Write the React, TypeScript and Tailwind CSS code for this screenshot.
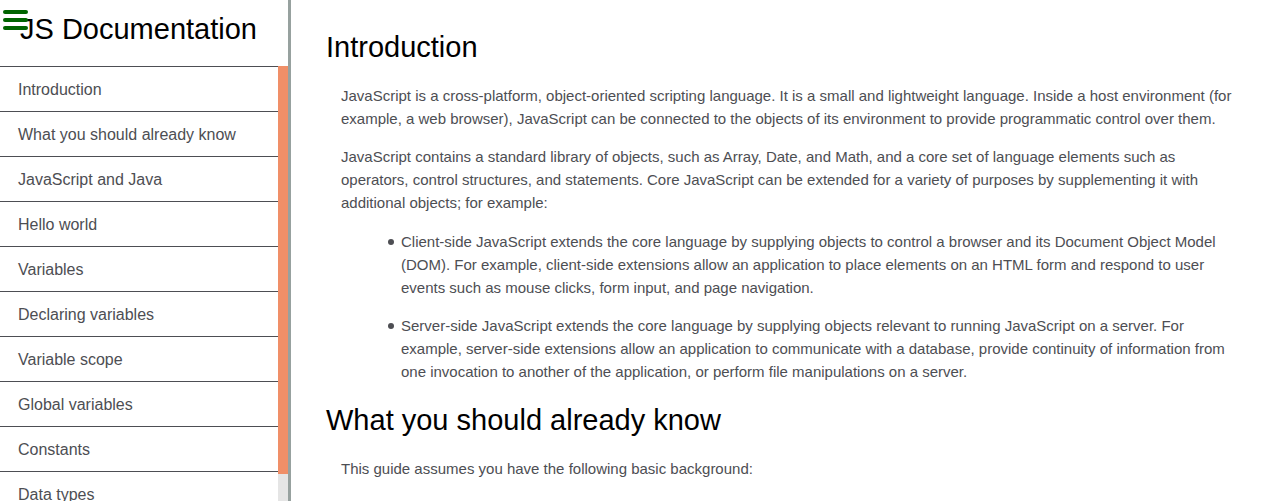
const topics = [
  "Introduction",
  "What you should already know",
  "JavaScript and Java",
  "Hello world",
  "Variables",
  "Declaring variables",
  "Variable scope",
  "Global variables",
  "Constants",
  "Data types",
];

const toId = (title: string) => title.replace(/ /g, "_");

const bulletItem =
  "flex gap-[7px] before:mt-[9px] before:size-1.5 before:shrink-0 before:rounded-full before:bg-[#4d4e53] before:content-['']";

function MenuButton() {
  return (
    <button
      type="button"
      aria-label="Toggle menu"
      className="absolute top-2.5 left-[3px] flex w-[25px] flex-col gap-1"
    >
      <span className="h-1 w-full rounded-sm bg-[#006400]" />
      <span className="h-1 w-full rounded-sm bg-[#006400]" />
      <span className="h-1 w-full rounded-sm bg-[#006400]" />
    </button>
  );
}

function Sidebar() {
  return (
    <nav className="relative flex w-[291px] shrink-0 flex-col border-r-[3px] border-[#97a19f]">
      <h1 className="px-5 pt-[13px] pb-5 text-[29px] leading-[33px] text-black">JS Documentation</h1>
      <MenuButton />
      <div className="flex min-h-0 flex-1">
        <ul className="min-w-0 flex-1 overflow-y-auto [scrollbar-width:none]">
          {topics.map((topic) => (
            <li key={topic} className="border-t border-[#4d4e53]">
              <a href={`#${toId(topic)}`} className="block px-[18px] pt-[11px] pb-[9px] text-base text-[#4d4e53]">
                {topic}
              </a>
            </li>
          ))}
        </ul>
        <div className="w-2.5 bg-[#e5e5e5]">
          <div className="h-[93.8%] bg-[#f08f68]" />
        </div>
      </div>
    </nav>
  );
}

export default function App() {
  return (
    <div className="flex h-screen overflow-hidden bg-white font-['Liberation_Sans',Arial,sans-serif]">
      <Sidebar />
      <main className="min-w-0 flex-1 overflow-y-auto pt-[31px] pr-[30px] pl-[35px] text-[15px] leading-[23px] text-[#4d4e53] [scrollbar-width:none]">
        <section id="Introduction">
          <h2 className="text-[29px] leading-[33px] text-black">Introduction</h2>
          <div className="flex flex-col gap-[15px] pt-5 pl-[15px]">
            <p>
              JavaScript is a cross-platform, object-oriented scripting language. It is a small and lightweight
              language. Inside a host environment (for example, a web browser), JavaScript can be connected to the
              objects of its environment to provide programmatic control over them.
            </p>
            <p>
              JavaScript contains a standard library of objects, such as Array, Date, and Math, and a core set of
              language elements such as operators, control structures, and statements. Core JavaScript can be extended
              for a variety of purposes by supplementing it with additional objects; for example:
            </p>
            <ul className="flex flex-col gap-[15px] pt-px pl-[47px]">
              <li className={bulletItem}>
                Client-side JavaScript extends the core language by supplying objects to control a browser and its
                Document Object Model (DOM). For example, client-side extensions allow an application to place elements
                on an HTML form and respond to user events such as mouse clicks, form input, and page navigation.
              </li>
              <li className={bulletItem}>
                Server-side JavaScript extends the core language by supplying objects relevant to running JavaScript on
                a server. For example, server-side extensions allow an application to communicate with a database,
                provide continuity of information from one invocation to another of the application, or perform file
                manipulations on a server.
              </li>
            </ul>
          </div>
        </section>
        <section id="What_you_should_already_know" className="pt-[21px]">
          <h2 className="text-[29px] leading-[33px] text-black">What you should already know</h2>
          <p className="pt-5 pl-[15px]">This guide assumes you have the following basic background:</p>
        </section>
      </main>
    </div>
  );
}
